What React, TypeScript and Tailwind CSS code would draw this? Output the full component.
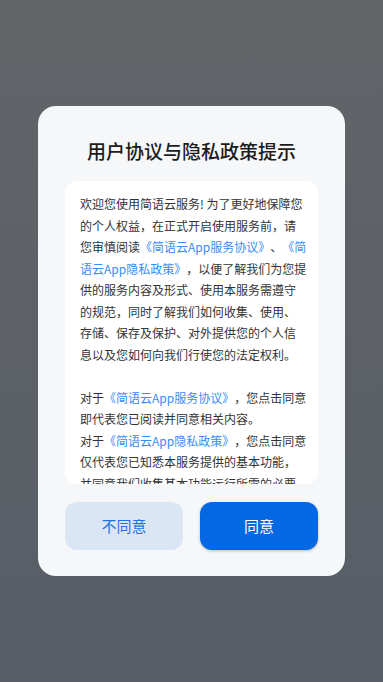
import React from "react";

const Link = ({ children }: { children: React.ReactNode }) => (
  <span className="text-[#3a8bf6]">{children}</span>
);

export default function App() {
  const font = { fontFamily: '"Noto Sans CJK SC", "Noto Sans", sans-serif' };
  return (
    <div
      className="w-full h-[682px] bg-gradient-to-b from-[#626468] to-[#575e66] flex items-center justify-center"
      style={font}
    >
      <div className="w-[307px] h-[470px] bg-[#f6f7f9] rounded-[18px] flex flex-col items-center pt-[31px] pb-[26px] px-[27px]">
        <div className="text-[19px] leading-[28px] font-medium text-[#1c1c1e]">
          用户协议与隐私政策提示
        </div>
        <div className="mt-[16px] w-[253px] h-[303px] bg-white rounded-[12px] pl-[15px] pr-[6px] pt-[12px] overflow-hidden text-[12px] leading-[21.5px] text-[#333333] whitespace-nowrap [text-spacing-trim:space-all]">
          <div>欢迎您使用简语云服务! 为了更好地保障您</div>
          <div>的个人权益，在正式开启使用服务前，请</div>
          <div>
            您审慎阅读<Link>《简语云App服务协议》</Link>、<Link>《简</Link>
          </div>
          <div>
            <Link>语云App隐私政策》</Link>，以便了解我们为您提
          </div>
          <div>供的服务内容及形式、使用本服务需遵守</div>
          <div>的规范，同时了解我们如何收集、使用、</div>
          <div>存储、保存及保护、对外提供您的个人信</div>
          <div>息以及您如何向我们行使您的法定权利。</div>
          <div className="h-[21.5px]" />
          <div>
            对于<Link>《简语云App服务协议》</Link>，您点击同意
          </div>
          <div>即代表您已阅读并同意相关内容。</div>
          <div>
            对于<Link>《简语云App隐私政策》</Link>，您点击同意
          </div>
          <div>仅代表您已知悉本服务提供的基本功能，</div>
          <div>并同意我们收集基本功能运行所需的必要</div>
          <div>信息。</div>
        </div>
        <div className="mt-[18px] w-[253px] flex gap-[17px]">
          <button className="w-[118px] h-[48px] rounded-[12px] bg-[#dbe6f5] text-[#1f72e4] text-[15px]">
            不同意
          </button>
          <button className="w-[118px] h-[48px] rounded-[12px] bg-[#0468e3] text-white text-[15px] shadow-[0_1px_3px_rgba(0,0,0,0.25)]">
            同意
          </button>
        </div>
      </div>
    </div>
  );
}
